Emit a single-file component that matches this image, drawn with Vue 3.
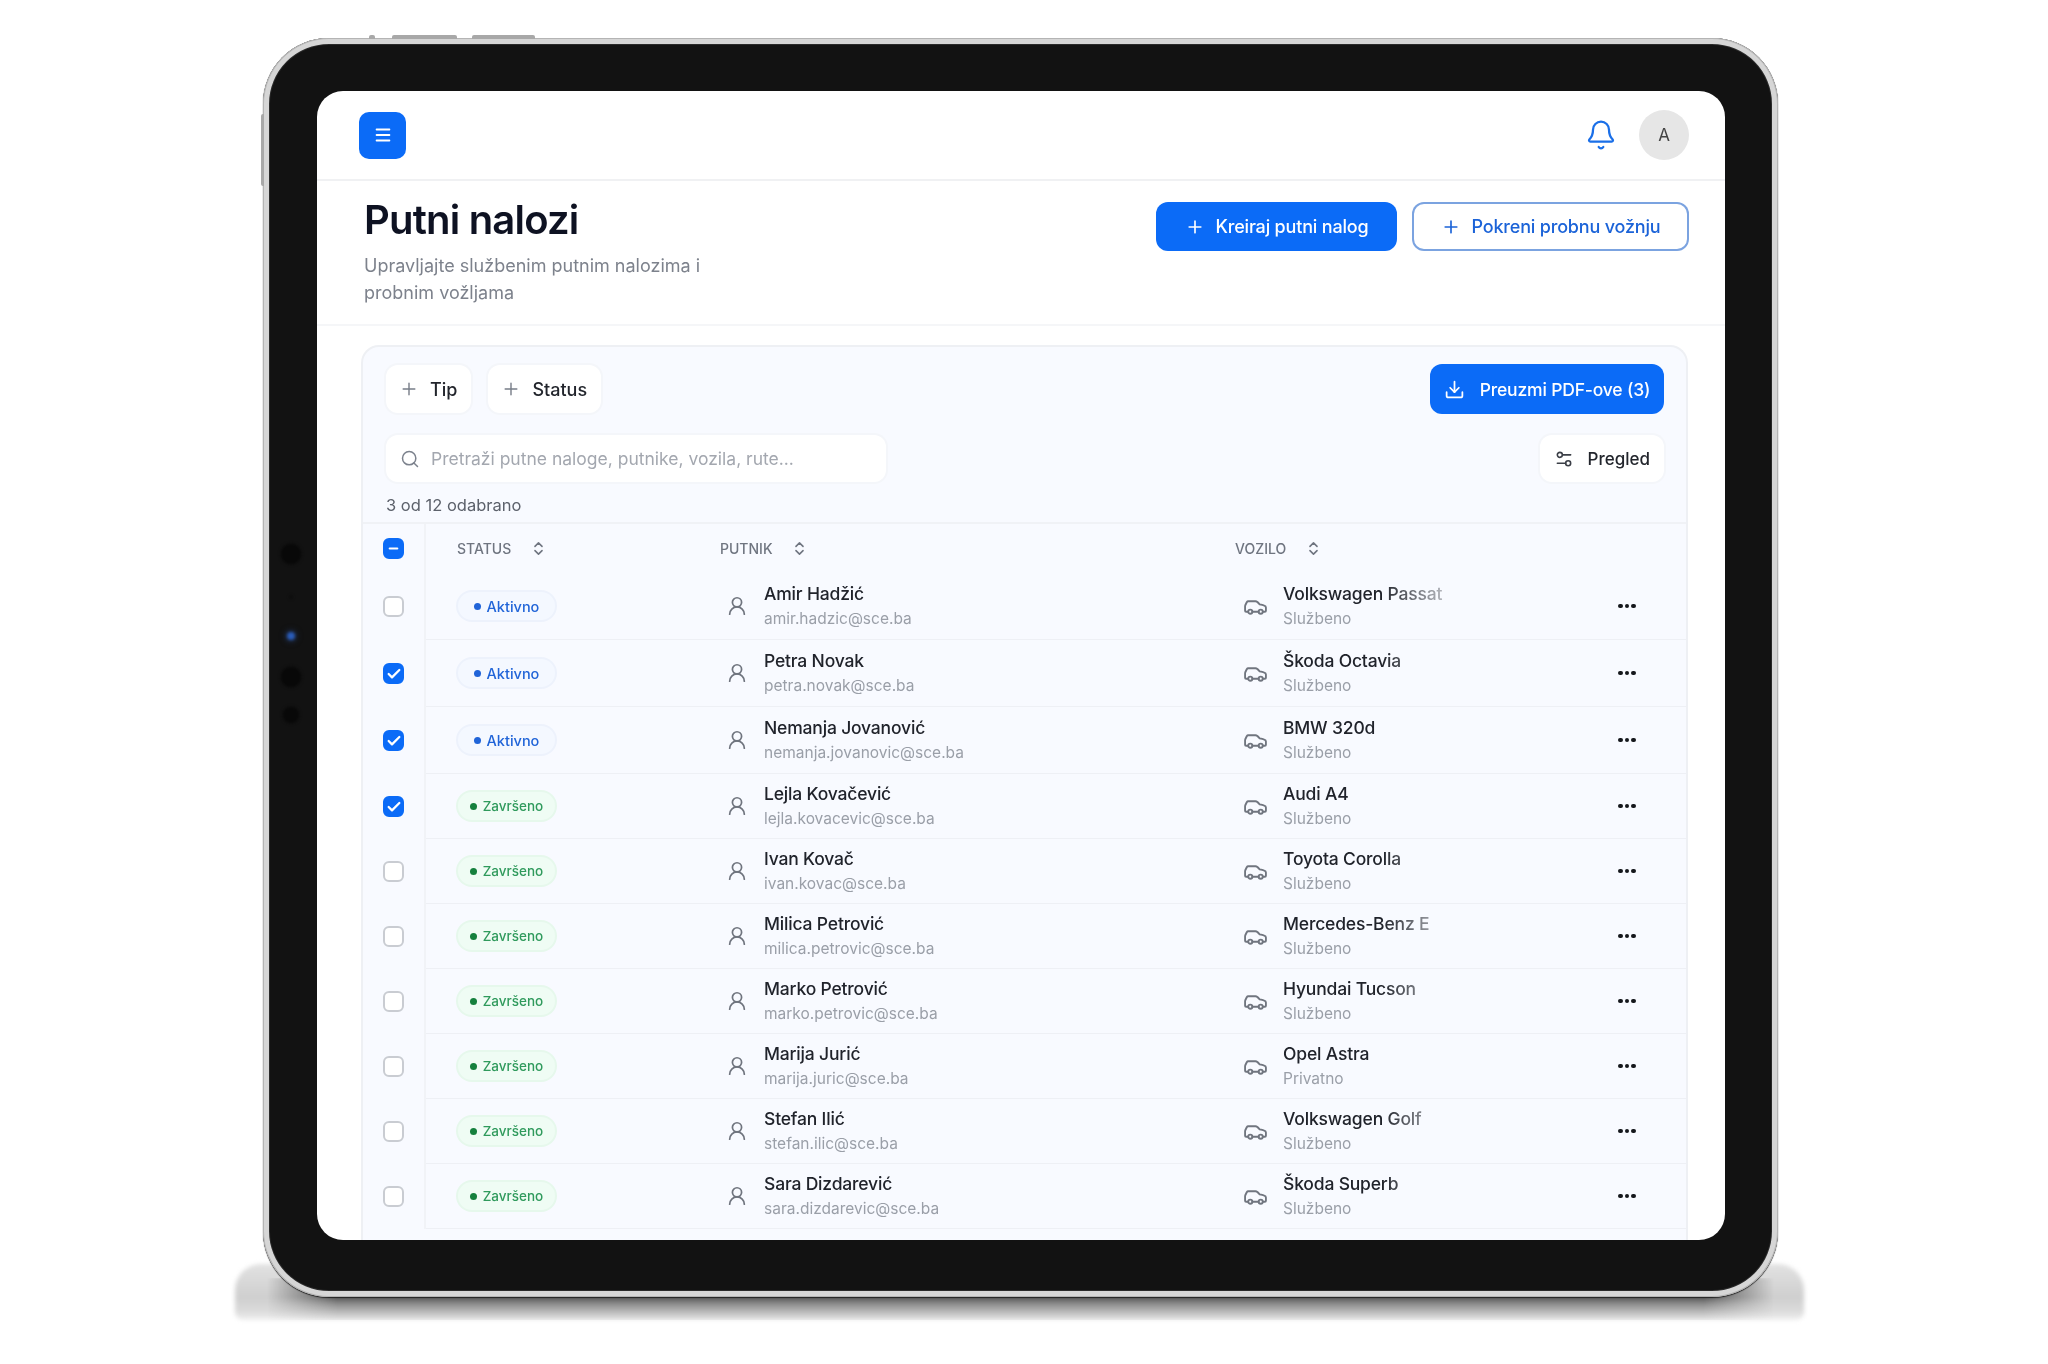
<template>
  <div class="page">
    <div class="device">
      <!-- hardware bits around the bezel -->
      <div class="floor-shadow"></div>
      <div class="contact-shadow"></div>
      <span class="hw-top hw-top-a"></span>
      <span class="hw-top hw-top-b"></span>
      <span class="hw-top hw-top-c"></span>
      <span class="hw-left"></span>
      <div class="cam cam-a"></div>
      <div class="cam cam-b"></div>
      <div class="cam cam-c"></div>
      <div class="cam cam-d"></div>
      <div class="cam cam-e"></div>

      <div class="screen">
        <header class="topbar">
          <button class="menu-btn">
            <svg width="22" height="22" viewBox="0 0 24 24" fill="none" stroke="#fff" stroke-width="2" stroke-linecap="round"><path d="M5 6h14M5 12h14M5 18h14" /></svg>
          </button>
          <div class="topbar-right">
            <svg class="bell" width="32" height="32" viewBox="0 0 24 24" fill="none" stroke="#1a6fe8" stroke-width="1.7" stroke-linecap="round" stroke-linejoin="round"><path d="M10.268 21a2 2 0 0 0 3.464 0" /><path d="M3.262 15.326A1 1 0 0 0 4 17h16a1 1 0 0 0 .74-1.673C19.41 13.956 18 12.499 18 8A6 6 0 0 0 6 8c0 4.499-1.411 5.956-2.738 7.326" /></svg>
            <div class="avatar">A</div>
          </div>
        </header>

        <section class="page-head">
          <div>
            <h1>Putni nalozi</h1>
            <p>Upravljajte službenim putnim nalozima i<br />probnim vožljama</p>
          </div>
          <div class="head-actions">
            <button class="btn primary">
              <svg width="20" height="20" viewBox="0 0 24 24" fill="none" stroke="currentColor" stroke-width="2" stroke-linecap="round"><path d="M5 12h14M12 5v14" /></svg>
              Kreiraj putni nalog
            </button>
            <button class="btn outline">
              <svg width="20" height="20" viewBox="0 0 24 24" fill="none" stroke="currentColor" stroke-width="2" stroke-linecap="round"><path d="M5 12h14M12 5v14" /></svg>
              Pokreni probnu vožnju
            </button>
          </div>
        </section>

        <section class="card">
          <div class="tools">
            <div class="tool-row">
              <div class="filters">
                <button class="chip">
                  <svg width="20" height="20" viewBox="0 0 24 24" fill="none" stroke="#777d88" stroke-width="1.7" stroke-linecap="round"><path d="M5 12h14M12 5v14" /></svg>
                  Tip
                </button>
                <button class="chip">
                  <svg width="20" height="20" viewBox="0 0 24 24" fill="none" stroke="#777d88" stroke-width="1.7" stroke-linecap="round"><path d="M5 12h14M12 5v14" /></svg>
                  Status
                </button>
              </div>
              <button class="btn primary pdf">
                <svg width="21" height="21" viewBox="0 0 24 24" fill="none" stroke="currentColor" stroke-width="2" stroke-linecap="round" stroke-linejoin="round"><path d="M21 15v4a2 2 0 0 1-2 2H5a2 2 0 0 1-2-2v-4" /><path d="m7 10 5 5 5-5" /><path d="M12 15V3" /></svg>
                Preuzmi PDF-ove (3)
              </button>
            </div>
            <div class="tool-row second">
              <div class="search">
                <svg width="20" height="20" viewBox="0 0 24 24" fill="none" stroke="#7c828d" stroke-width="1.8" stroke-linecap="round"><circle cx="11" cy="11" r="8" /><path d="m21 21-4.3-4.3" /></svg>
                <span>Pretraži putne naloge, putnike, vozila, rute...</span>
              </div>
              <button class="chip view">
                <svg width="20" height="20" viewBox="0 0 24 24" fill="none" stroke="#3b3f47" stroke-width="1.9" stroke-linecap="round"><path d="M20 7h-9" /><path d="M14 17H4" /><circle cx="17" cy="17" r="3" /><circle cx="7" cy="7" r="3" /></svg>
                Pregled
              </button>
            </div>
            <div class="count">3 od 12 odabrano</div>
          </div>

          <div class="table">
            <div class="grid-row head">
              <div class="cell-check">
                <span class="check on">
                  <svg width="15" height="15" viewBox="0 0 24 24" fill="none" stroke="#fff" stroke-width="3.5" stroke-linecap="round"><path d="M6 12h12" /></svg>
                </span>
              </div>
              <div v-for="col in columns" :key="col" class="col-title">
                {{ col }}
                <svg width="17" height="17" viewBox="0 0 24 24" fill="none" stroke="#6f7580" stroke-width="2.2" stroke-linecap="round" stroke-linejoin="round"><path d="m7 15 5 5 5-5" /><path d="m7 9 5-5 5 5" /></svg>
              </div>
              <div></div>
            </div>

            <div v-for="row in rows" :key="row.email" class="grid-row" :class="{ tall: row.status === 'Aktivno' }">
              <div class="cell-check">
                <span class="check" :class="{ on: row.checked }">
                  <svg v-if="row.checked" width="16" height="16" viewBox="0 0 24 24" fill="none" stroke="#fff" stroke-width="3.4" stroke-linecap="round" stroke-linejoin="round"><path d="M20 6 9 17l-5-5" /></svg>
                </span>
              </div>
              <div class="cell">
                <span class="badge" :class="row.status === 'Aktivno' ? 'blue' : 'green'"><i></i>{{ row.status }}</span>
              </div>
              <div class="cell person">
                <svg width="22" height="22" viewBox="0 0 24 24" fill="none" stroke="#70757f" stroke-width="1.9" stroke-linecap="round"><circle cx="12" cy="8" r="5" /><path d="M20 21a8 8 0 0 0-16 0" /></svg>
                <div class="stack">
                  <span class="name">{{ row.name }}</span>
                  <span class="sub">{{ row.email }}</span>
                </div>
              </div>
              <div class="cell vehicle">
                <svg width="25" height="25" viewBox="0 0 24 24" fill="none" stroke="#70757f" stroke-width="1.8" stroke-linecap="round" stroke-linejoin="round"><path d="M19 17h2c.6 0 1-.4 1-1v-3c0-.9-.7-1.7-1.5-1.9C18.7 10.6 16 10 16 10s-1.3-1.4-2.2-2.3c-.5-.4-1.1-.7-1.8-.7H5c-.6 0-1.1.4-1.4.9l-1.4 2.9A3.7 3.7 0 0 0 2 12v4c0 .6.4 1 1 1h2" /><circle cx="7" cy="17" r="2" /><path d="M9 17h6" /><circle cx="17" cy="17" r="2" /></svg>
                <div class="stack">
                  <span class="name faded">{{ row.car }}</span>
                  <span class="sub">{{ row.use }}</span>
                </div>
              </div>
              <div class="cell dots"><b></b><b></b><b></b></div>
            </div>
          </div>
        </section>
      </div>
    </div>
  </div>
</template>

<script setup>
const columns = ['STATUS', 'PUTNIK', 'VOZILO']

const rows = [
  { name: 'Amir Hadžić', email: 'amir.hadzic@sce.ba', car: 'Volkswagen Passat', use: 'Službeno', status: 'Aktivno', checked: false },
  { name: 'Petra Novak', email: 'petra.novak@sce.ba', car: 'Škoda Octavia', use: 'Službeno', status: 'Aktivno', checked: true },
  { name: 'Nemanja Jovanović', email: 'nemanja.jovanovic@sce.ba', car: 'BMW 320d', use: 'Službeno', status: 'Aktivno', checked: true },
  { name: 'Lejla Kovačević', email: 'lejla.kovacevic@sce.ba', car: 'Audi A4', use: 'Službeno', status: 'Završeno', checked: true },
  { name: 'Ivan Kovač', email: 'ivan.kovac@sce.ba', car: 'Toyota Corolla', use: 'Službeno', status: 'Završeno', checked: false },
  { name: 'Milica Petrović', email: 'milica.petrovic@sce.ba', car: 'Mercedes-Benz E', use: 'Službeno', status: 'Završeno', checked: false },
  { name: 'Marko Petrović', email: 'marko.petrovic@sce.ba', car: 'Hyundai Tucson', use: 'Službeno', status: 'Završeno', checked: false },
  { name: 'Marija Jurić', email: 'marija.juric@sce.ba', car: 'Opel Astra', use: 'Privatno', status: 'Završeno', checked: false },
  { name: 'Stefan Ilić', email: 'stefan.ilic@sce.ba', car: 'Volkswagen Golf', use: 'Službeno', status: 'Završeno', checked: false },
  { name: 'Sara Dizdarević', email: 'sara.dizdarevic@sce.ba', car: 'Škoda Superb', use: 'Službeno', status: 'Završeno', checked: false },
]
</script>

<style>
html,
body {
  background: #fff;
}
</style>

<style scoped>
.page {
  width: 2048px;
  height: 1364px;
  padding: 38px 0 0 263px;
  box-sizing: border-box;
  overflow: hidden;
  isolation: isolate;
  background: #fff;
  font-family: Inter, "Liberation Sans", sans-serif;
  color: #14171f;
}

.device {
  position: relative;
  width: 1515px;
  height: 1259px;
  box-sizing: border-box;
  padding: 53px 53px 57px 54px;
  background: #121212;
  border-radius: 66px;
  box-shadow: inset 0 0 0 1px #b4b4b4, inset 0 0 0 6px #d6d6d6, inset 0 0 0 7px #2a2a2a, 0 1px 1px #222;
}

/* 底部投影 */
.floor-shadow {
  position: absolute;
  left: -28px;
  right: -26px;
  top: 1226px;
  height: 56px;
  z-index: -1;
  border-radius: 26px 26px 8px 8px;
  background: linear-gradient(180deg, #e2e2e2 0%, #cfcfcf 60%, #dcdcdc 85%, #f0f0f0 100%);
  filter: blur(2px);
}

.contact-shadow {
  position: absolute;
  left: 4px;
  right: 4px;
  top: 1240px;
  height: 42px;
  z-index: -1;
  background: linear-gradient(180deg, #555 0%, #555 45%, #8d8d8d 62%, #c4c4c4 85%, #e6e6e6 100%);
  -webkit-mask-image: linear-gradient(90deg, transparent 0, #000 70px, #000 calc(100% - 70px), transparent 100%);
  mask-image: linear-gradient(90deg, transparent 0, #000 70px, #000 calc(100% - 70px), transparent 100%);
  filter: blur(1.5px);
}

.hw-top {
  position: absolute;
  top: -3px;
  height: 4px;
  background: #a8a8a8;
  border-radius: 2px 2px 0 0;
}

.hw-top-a {
  left: 106px;
  width: 6px;
}

.hw-top-b {
  left: 129px;
  width: 65px;
}

.hw-top-c {
  left: 209px;
  width: 63px;
}

.hw-left {
  position: absolute;
  left: -2px;
  top: 76px;
  width: 3px;
  height: 72px;
  background: #a8a8a8;
  border-radius: 2px 0 0 2px;
}

.cam {
  position: absolute;
  left: 28px;
  background: #080808;
  border-radius: 50%;
  transform: translate(-50%, -50%);
  filter: blur(1.5px);
}

.cam-a {
  top: 516px;
  width: 21px;
  height: 21px;
}

.cam-b {
  top: 559px;
  width: 3px;
  height: 3px;
}

.cam-c {
  top: 598px;
  width: 8px;
  height: 8px;
  background: #2a5cb8;
  box-shadow: 0 0 5px 2px #1c2a44;
}

.cam-d {
  top: 639px;
  width: 21px;
  height: 21px;
}

.cam-e {
  top: 677px;
  width: 17px;
  height: 17px;
}

.screen {
  height: 1149px;
  display: flex;
  flex-direction: column;
  overflow: hidden;
  background: #fff;
  border-radius: 26px;
  filter: blur(0.5px);
}

.topbar {
  flex: none;
  height: 90px;
  box-sizing: border-box;
  padding: 0 36px 0 42px;
  display: flex;
  align-items: center;
  justify-content: space-between;
  border-bottom: 2px solid #f0f1f3;
}

button {
  font-family: inherit;
  border: none;
  padding: 0;
}

.menu-btn {
  width: 47px;
  height: 47px;
  display: flex;
  align-items: center;
  justify-content: center;
  background: #0b6bf7;
  border-radius: 10px;
}

.topbar-right {
  display: flex;
  align-items: center;
  gap: 22px;
}

.bell {
  display: block;
}

.avatar {
  width: 50px;
  height: 50px;
  display: flex;
  align-items: center;
  justify-content: center;
  border-radius: 50%;
  background: #e6e6e6;
  color: #444;
  font-size: 17px;
}

.page-head {
  flex: none;
  height: 145px;
  box-sizing: border-box;
  padding: 16px 36px 0 47px;
  display: flex;
  justify-content: space-between;
  align-items: flex-start;
  border-bottom: 2px solid #f5f6f8;
}

h1 {
  margin: 0;
  font-size: 40px;
  line-height: 46px;
  font-weight: 600;
  letter-spacing: -0.02em;
  color: #0e1222;
}

.page-head p {
  margin: 9px 0 0;
  font-size: 18px;
  line-height: 27px;
  color: #7d828c;
}

.head-actions {
  display: flex;
  gap: 15px;
  margin-top: 5px;
}

.btn {
  height: 49px;
  display: flex;
  align-items: center;
  justify-content: center;
  gap: 11px;
  border-radius: 12px;
  font-size: 18px;
  font-weight: 500;
  letter-spacing: -0.01em;
}

.primary {
  width: 241px;
  background: #0b6bf7;
  color: #fff;
}

.outline {
  width: 277px;
  background: #fff;
  color: #1b63d8;
  box-shadow: inset 0 0 0 2px #7ba3e0;
}

.card {
  flex: 1;
  margin: 19px 37px 0 44px;
  background: #f8faff;
  border: 2px solid #eef0f4;
  border-bottom: none;
  border-radius: 18px 18px 0 0;
}

.tools {
  padding: 17px 22px 0 23px;
}

.tool-row {
  display: flex;
  justify-content: space-between;
  align-items: center;
}

.second {
  margin-top: 21px;
}

.filters {
  display: flex;
  gap: 17px;
}

.chip {
  height: 48px;
  padding: 0 14px 0 13px;
  display: flex;
  align-items: center;
  gap: 11px;
  background: #fff;
  border-radius: 12px;
  box-shadow: 0 0 0 2px #f4f6fa;
  font-size: 18px;
  font-weight: 500;
  color: #22252c;
}

.pdf {
  width: 234px;
  height: 50px;
  gap: 15px;
  font-size: 17.5px;
}

.search {
  width: 500px;
  height: 47px;
  box-sizing: border-box;
  padding: 0 14px;
  display: flex;
  align-items: center;
  gap: 11px;
  background: #fff;
  border-radius: 12px;
  box-shadow: 0 0 0 2px #f4f6fa;
  font-size: 17.5px;
  color: #a3a7af;
}

.view {
  height: 47px;
  padding: 0 14px;
  gap: 14px;
  font-size: 17px;
}

.count {
  margin-top: 12px;
  font-size: 16.5px;
  line-height: 22px;
  color: #5c616b;
}

.table {
  margin-top: 6px;
  border-top: 2px solid #f0f2f6;
}

.grid-row {
  display: grid;
  grid-template-columns: 63px 294px 515px 1fr 70px;
  height: 65px;
}

.grid-row.head {
  height: 49px;
}

.grid-row.tall {
  height: 67px;
}

.cell-check {
  display: flex;
  align-items: center;
  justify-content: center;
  border-right: 2px solid #f1f3f7;
}

.check {
  width: 21px;
  height: 21px;
  box-sizing: border-box;
  display: flex;
  align-items: center;
  justify-content: center;
  border: 2px solid #c9ccd2;
  border-radius: 6px;
  background: #fff;
}

.check.on {
  background: #0b6bf7;
  border-color: #0b6bf7;
}

.col-title {
  display: flex;
  align-items: center;
  gap: 18.5px;
  font-size: 14px;
  font-weight: 500;
  color: #6f7580;
}

.col-title:nth-child(2) {
  padding-left: 31px;
}

.cell {
  display: flex;
  align-items: center;
  border-bottom: 1px solid #eef0f5;
}

.cell:nth-child(2) {
  padding-left: 32px;
}

.badge {
  width: 97px;
  height: 28px;
  box-sizing: border-box;
  display: flex;
  align-items: center;
  justify-content: center;
  gap: 6px;
  border-radius: 15px;
  font-size: 14.5px;
  font-weight: 500;
}

.badge i {
  width: 7px;
  height: 7px;
  border-radius: 50%;
  background: currentColor;
}

.blue {
  color: #2064d8;
  background: #f4f8ff;
  box-shadow: 0 0 0 2px #edf2fc;
}

.green {
  color: #2f9a5c;
  background: #effcf4;
  box-shadow: 0 0 0 2px #e6f8ec;
  font-size: 13.5px;
}

.green i {
  background: #15803d;
}

.person {
  gap: 16px;
  padding-left: 6px;
}

.vehicle {
  gap: 15px;
  padding-left: 8px;
}

.stack {
  display: flex;
  flex-direction: column;
  gap: 4px;
  margin-top: -2px;
}

.name {
  font-size: 17.5px;
  line-height: 23px;
  font-weight: 500;
  letter-spacing: -0.01em;
  color: #20232b;
  white-space: nowrap;
}

.faded {
  width: 165px;
  overflow: hidden;
  -webkit-mask-image: linear-gradient(90deg, #000 60%, rgba(0, 0, 0, 0.35) 95%);
  mask-image: linear-gradient(90deg, #000 60%, rgba(0, 0, 0, 0.35) 95%);
}

.sub {
  font-size: 15.5px;
  line-height: 19px;
  color: #9a9fa8;
}

.dots {
  gap: 2px;
  padding-left: 2px;
}

.dots b {
  width: 4.5px;
  height: 4.5px;
  border-radius: 50%;
  background: #15171c;
}
</style>
